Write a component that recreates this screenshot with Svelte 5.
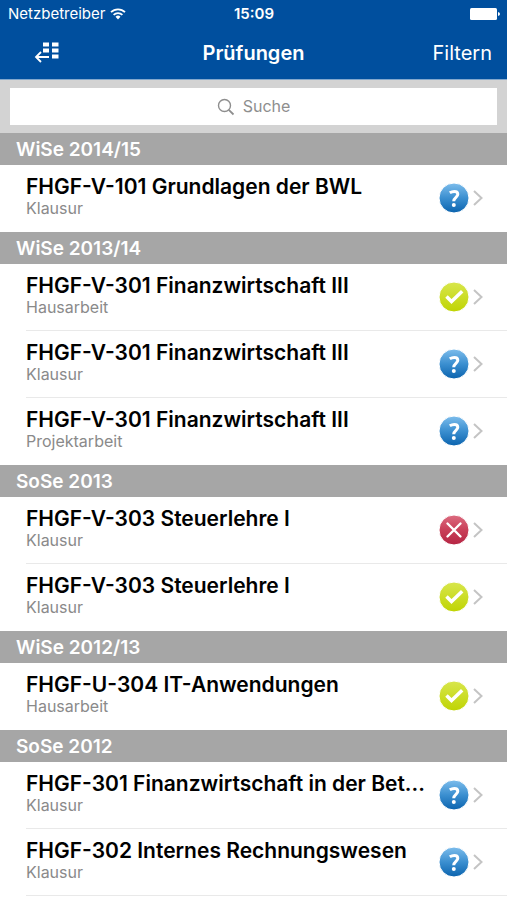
<script>
  const semesters = [
    { name: 'WiSe 2014/15', exams: [
      { title: 'FHGF-V-101 Grundlagen der BWL', kind: 'Klausur', status: 'open' }
    ] },
    { name: 'WiSe 2013/14', exams: [
      { title: 'FHGF-V-301 Finanzwirtschaft III', kind: 'Hausarbeit', status: 'passed' },
      { title: 'FHGF-V-301 Finanzwirtschaft III', kind: 'Klausur', status: 'open' },
      { title: 'FHGF-V-301 Finanzwirtschaft III', kind: 'Projektarbeit', status: 'open' }
    ] },
    { name: 'SoSe 2013', exams: [
      { title: 'FHGF-V-303 Steuerlehre I', kind: 'Klausur', status: 'failed' },
      { title: 'FHGF-V-303 Steuerlehre I', kind: 'Klausur', status: 'passed' }
    ] },
    { name: 'WiSe 2012/13', exams: [
      { title: 'FHGF-U-304 IT-Anwendungen', kind: 'Hausarbeit', status: 'passed' }
    ] },
    { name: 'SoSe 2012', exams: [
      { title: 'FHGF-301 Finanzwirtschaft in der Bet...', kind: 'Klausur', status: 'open' },
      { title: 'FHGF-302 Internes Rechnungswesen', kind: 'Klausur', status: 'open' }
    ] }
  ];
  let query = $state('');
  const shown = $derived(
    semesters
      .map((s) => ({ ...s, exams: s.exams.filter((e) => e.title.toLowerCase().includes(query.toLowerCase())) }))
      .filter((s) => s.exams.length > 0)
  );
</script>

<svg class="defs" width="0" height="0" aria-hidden="true">
  <defs>
    <linearGradient id="open" x2="0" y2="1"><stop stop-color="#7dbdec" /><stop offset=".5" stop-color="#3b8fd0" /><stop offset="1" stop-color="#0b63ae" /></linearGradient>
    <linearGradient id="passed" x2="0" y2="1"><stop stop-color="#d8e64c" /><stop offset="1" stop-color="#bfd402" /></linearGradient>
    <linearGradient id="failed" x2="0" y2="1"><stop stop-color="#dc6c80" /><stop offset=".5" stop-color="#c93f58" /><stop offset="1" stop-color="#b52443" /></linearGradient>
  </defs>
</svg>

<div class="app">
  <header>
    <div class="status">
      <span class="carrier">Netzbetreiber
        <svg width="16" height="12" viewBox="0 0 16 12" fill="none" stroke="#fff" stroke-width="1.8" aria-hidden="true">
          <path d="M1 4.2a10 10 0 0 1 14 0M3.6 6.9a6.3 6.3 0 0 1 8.8 0" />
          <path d="M5.5 8.8a3.6 3.6 0 0 1 5 0L8 11.4z" fill="#fff" stroke="none" />
        </svg>
      </span>
      <span class="time">15:09</span>
      <svg class="battery" width="30" height="12" viewBox="0 0 30 12" fill="#fff" aria-hidden="true">
        <rect width="27" height="12" rx="1.5" /><path d="M28 4q2 .5 2 2t-2 2z" />
      </svg>
    </div>
    <nav>
      <button class="back" aria-label="Zurück zur Übersicht">
        <svg width="26" height="22" viewBox="0 0 26 22" aria-hidden="true">
          <path d="M9 .5h6v4H9zM18 .5h6.500v4H18zM9 6.500h6v4H9zM18 6.500h6.500v4H18zM18 12.500h6.500v4H18z" fill="#fff" />
          <path d="M15 15H2M7 10l-5 5 5 5" fill="none" stroke="#fff" stroke-width="1.8" />
        </svg>
      </button>
      <h1>Prüfungen</h1>
      <button class="filter">Filtern</button>
    </nav>
  </header>

  <div class="search">
    <label>
      <svg width="18" height="18" viewBox="0 0 18 18" fill="none" stroke="#8e8e8e" stroke-width="1.400" aria-hidden="true">
        <circle cx="7.500" cy="7.500" r="6" /><path d="M11.800 11.800l4.700 4.700" stroke-width="1.800" />
      </svg>
      <input type="search" placeholder="Suche" aria-label="Suche" bind:value={query} />
    </label>
  </div>

  <main>
    {#each shown as semester}
      <section>
        <h2>{semester.name}</h2>
        <ul>
          {#each semester.exams as exam}
            <li>
              <a href="#details">
                <span class="text">
                  <span class="title">{exam.title}</span>
                  <span class="kind">{exam.kind}</span>
                </span>
                <svg class="badge" width="30" height="30" viewBox="0 0 30 30" aria-hidden="true">
                  <circle cx="15" cy="15" r="15" fill="url(#{exam.status})" />
                  {#if exam.status === 'open'}
                    <path d="M10.800 9.800C12.500 8.700 14 8.400 15.300 8.400c2.200 0 3.500 1.100 3.500 2.900 0 3-4.100 3.100-4.100 7" stroke-width="3" />
                    <circle cx="14.800" cy="22" r="2" fill="#fff" stroke="none" />
                  {:else if exam.status === 'passed'}
                    <path d="M7.500 14.500l5 5L23.200 9.200" stroke-width="3.500" />
                  {:else}
                    <path d="M8.500 8.500l13 13M21.500 8.500l-13 13" stroke-width="2.400" stroke-linecap="round" />
                  {/if}
                </svg>
                <svg class="chevron" width="10" height="16" viewBox="0 0 10 16" aria-hidden="true">
                  <path d="M1 1l7.500 7L1 15" />
                </svg>
              </a>
            </li>
          {/each}
        </ul>
      </section>
    {/each}
  </main>
</div>

<style>
  :global(body) { margin: 0; background: #fff; }
  .defs { position: absolute; }
  .app {
    min-height: 100vh;
    box-sizing: border-box;
    font-family: Inter, "Liberation Sans", sans-serif;
    color: #000;
  }
  header { background: #004f9e; color: #fff; border-bottom: 1px solid #83a8cd; }
  .status {
    display: grid;
    grid-template-columns: 1fr auto 1fr;
    align-items: center;
    height: 27px;
    padding: 0 7px 0 8px;
    font-size: 15px;
  }
  .carrier { display: flex; align-items: center; gap: 5px; }
  .time { font-weight: 600; }
  .battery { justify-self: end; }
  nav {
    display: grid;
    grid-template-columns: 1fr auto 1fr;
    align-items: center;
    height: 52px;
    padding: 0 15px;
  }
  nav button {
    padding: 0;
    border: 0;
    background: none;
    color: inherit;
    font: inherit;
    font-size: 20px;
    cursor: pointer;
  }
  .back { justify-self: start; margin-left: 19px; display: flex; }
  .filter { justify-self: end; }
  h1 { margin: 0; font-size: 20px; font-weight: 600; }
  .search { background: #d3d3d3; padding: 8px 10px; }
  label {
    display: flex;
    align-items: center;
    justify-content: center;
    gap: 8px;
    height: 37px;
    background: #fff;
  }
  input {
    field-sizing: content;
    appearance: none;
    padding: 0 0 2px;
    border: 0;
    outline: 0;
    background: none;
    font: inherit;
    font-size: 16px;
    color: #333;
  }
  input::placeholder { color: #8e8e8e; opacity: 1; }
  h2 {
    margin: 0;
    padding: 2px 0 0 16px;
    background: #a6a6a6;
    color: #fff;
    font-size: 19px;
    line-height: 30px;
    font-weight: 600;
  }
  ul { list-style: none; margin: 0; padding: 0; }
  li { padding-left: 26px; }
  a {
    display: flex;
    align-items: center;
    box-sizing: border-box;
    height: 67px;
    padding-right: 24px;
    border-bottom: 1px solid #e9e9e9;
    color: inherit;
    text-decoration: none;
  }
  section:not(:last-child) li:last-child a { border-bottom-color: transparent; }
  .text { flex: 1; min-width: 0; display: flex; flex-direction: column; padding-bottom: 2px; }
  .title {
    font-size: 21px;
    line-height: 22px;
    font-weight: 600;
    white-space: nowrap;
  }
  .kind { font-size: 16px; line-height: 20px; color: #8a8a8a; }
  .badge { flex: none; margin-right: 4px; fill: none; stroke: #fff; }
  .chevron { flex: none; fill: none; stroke: #c4c4c4; stroke-width: 2; }
</style>
